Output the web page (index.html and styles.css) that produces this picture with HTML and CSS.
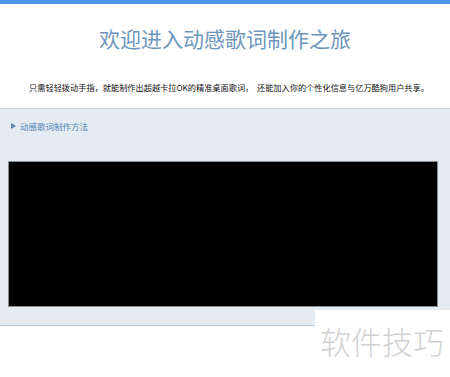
FILE: index.html
```html
<!DOCTYPE html>
<html>
<head>
<meta charset="utf-8">
<link rel="stylesheet" href="styles.css">
</head>
<body>
<div class="topbar"></div>
<header class="intro">
  <h1 class="title">欢迎进入动感歌词制作之旅</h1>
  <p class="sub">只需轻轻拨动手指，就能制作出超越卡拉OK的精准桌面歌词，&nbsp; 还能加入你的个性化信息与亿万酷狗用户共享。</p>
</header>
<section class="panel">
  <a class="howto"><span class="tri"></span>动感歌词制作方法</a>
  <div class="video"></div>
</section>
<div class="watermark">软件技巧</div>
</body>
</html>
```
FILE: styles.css
```css
html, body {
  margin: 0;
  padding: 0;
  background: #fff;
  font-family: "Noto Sans CJK SC", "Liberation Sans", sans-serif;
  width: 450px;
  height: 377px;
  overflow: hidden;
  position: relative;
}
.topbar {
  height: 4px;
  background: #4a95e6;
}
.intro {
  height: 104px;
  display: flex;
  flex-direction: column;
  align-items: center;
}
.title {
  margin: 22px 0 0;
  font-size: 21px;
  font-weight: normal;
  color: #6e96bc;
  line-height: 24px;
}
.sub {
  margin: 31px 0 0 8px;
  font-size: 8.2px;
  line-height: 12px;
  color: #111;
}
.panel {
  border-top: 1px solid #c4d2de;
  border-bottom: 1px solid #b9cadb;
  background: #e4ecf2;
  height: 218px;
  padding: 11px 12px 0 8px;
  box-sizing: border-box;
  display: flex;
  flex-direction: column;
}
.howto {
  display: flex;
  align-items: center;
  font-size: 8.5px;
  color: #4b80b6;
  line-height: 12px;
  padding-left: 3px;
}
.tri {
  width: 0;
  height: 0;
  border-left: 5px solid #5a86b4;
  border-top: 3.5px solid transparent;
  border-bottom: 3.5px solid transparent;
  margin-right: 4px;
}
.video {
  margin-top: 29px;
  height: 146px;
  background: #000;
  border: 1px solid #8a8f94;
  box-sizing: border-box;
}
.watermark {
  position: absolute;
  left: 315px;
  top: 310px;
  width: 135px;
  height: 67px;
  background: #fff;
  color: #d2d2d2;
  font-size: 31px;
  line-height: 34px;
  padding: 14px 0 0 5px;
  box-sizing: border-box;
  font-weight: 300;
}
```
